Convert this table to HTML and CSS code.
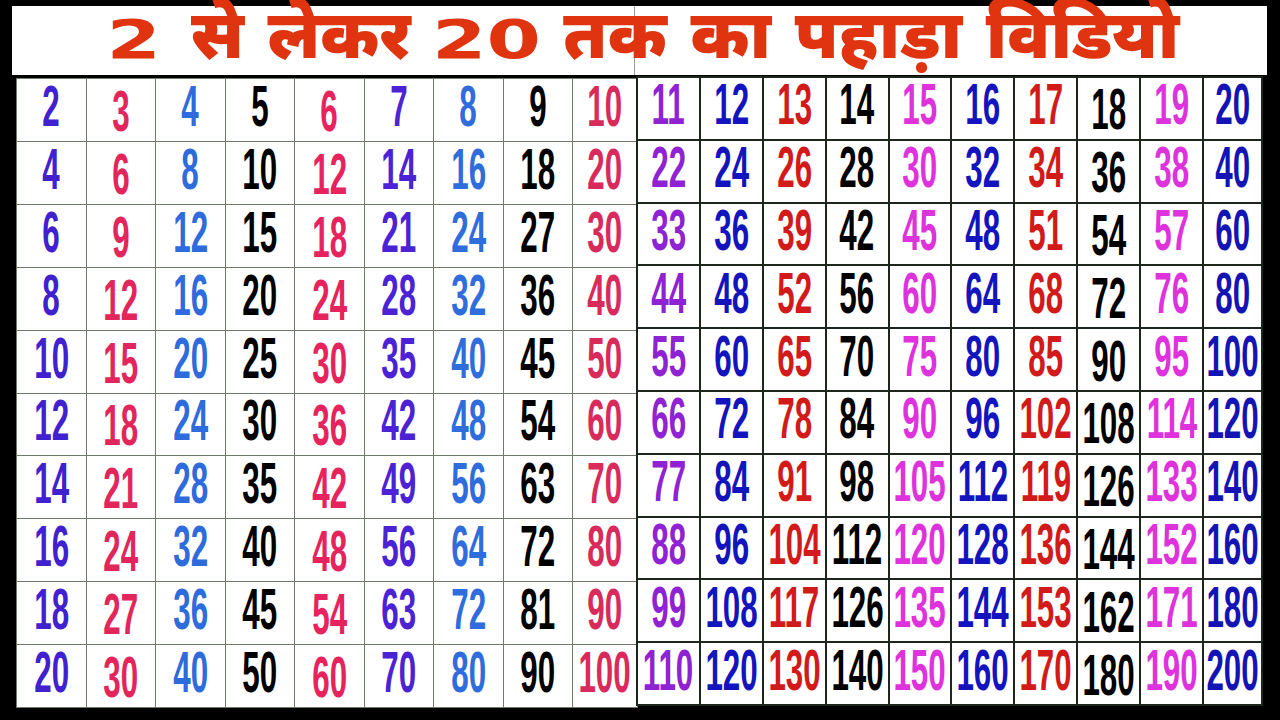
FILE: index.html
```html
<!DOCTYPE html>
<html lang="hi">
<head>
<meta charset="utf-8">
<title>2 से लेकर 20 तक का पहाड़ा</title>
<link rel="stylesheet" href="styles.css">
</head>
<body>
<div class="page">
  <header class="title">
    <h1 class="title-text"><span class="num">2</span> से लेकर <span class="num">20</span> तक का पहाड़ा विडियो</h1>
    <div class="seam"></div>
  </header>
  <div class="tables">
    <div class="table left" id="left"></div>
    <div class="table right" id="right"></div>
  </div>
</div>
<script src="script.js"></script>
</body>
</html>
```
FILE: styles.css
```css
html, body {
  margin: 0;
  padding: 0;
  background: #000;
}
.page {
  width: 1280px;
  height: 720px;
  padding: 6px 13px 0 12px;
  box-sizing: border-box;
  overflow: hidden;
}
.title {
  position: relative;
  height: 69px;
  background: #fff;
  display: flex;
  align-items: center;
  justify-content: center;
}
.title-text {
  margin: 0;
  padding: 0;
  font-family: "Noto Sans Devanagari", "Lohit Devanagari", "Noto Sans", sans-serif;
  font-weight: 900;
  font-size: 68px;
  line-height: 69px;
  color: #e0330f;
  word-spacing: 6px;
  position: relative;
  z-index: 1;
  white-space: nowrap;
}
.num {
  font-family: "DejaVu Sans", sans-serif;
  font-weight: 700;
  font-size: 54px;
  display: inline-block;
  transform: scaleX(1.45);
  margin: 0 15px;
}
.seam {
  position: absolute;
  left: 622px;
  top: 0;
  bottom: 0;
  width: 1px;
  background: #9a9a9a;
}
.tables {
  display: flex;
  align-items: flex-start;
}
.table {
  display: grid;
  grid-template-rows: repeat(10, 1fr);
  box-sizing: border-box;
}
.left {
  margin-top: 3px;
  margin-left: 4px;
  width: 622px;
  height: 630px;
  grid-template-columns: repeat(8, 1fr) 64px;
  gap: 1px;
  background: #6f7a6a;
  border: 1px solid #6f7a6a;
}
.right {
  margin-top: 1px;
  margin-left: -2px;
  width: 627px;
  height: 630px;
  grid-template-columns: repeat(9, 1fr) 57px;
  gap: 2px;
  background: #1c261c;
  border: 2px solid #1c261c;
  position: relative;
  z-index: 2;
}
.cell {
  background: #fff;
  display: flex;
  align-items: center;
  justify-content: center;
  overflow: visible;
  min-width: 0;
}
.cell span {
  display: inline-block;
  position: relative;
  top: -4px;
  font-family: "Liberation Sans", Arial, sans-serif;
  font-weight: 700;
  font-size: 57px;
  line-height: 46px;
  height: 46px;
  transform: scaleX(0.55);
  white-space: nowrap;
}
.c2 { color: #4121cf; }
.c3 { color: #e2265c; }
.c4 { color: #2e6bdc; }
.c5 { color: #000; }
.c6 { color: #e6235c; }
.c7 { color: #4b23d4; }
.c8 { color: #2f6ddc; }
.c9 { color: #000; }
.c10 { color: #d92a5c; }
.c11 { color: #8f22d2; }
.c12 { color: #1414bf; }
.c13 { color: #d21a1a; }
.c14 { color: #000; }
.c15 { color: #de32dc; }
.c16 { color: #1414bf; }
.c17 { color: #d21a1a; }
.c18 { color: #000; }
.c19 { color: #de32dc; }
.c20 { color: #1414b5; }
.low span { top: 1px; }
```
FILE: script.js
```js
function build(id, from, to) {
  var el = document.getElementById(id);
  var html = '';
  for (var r = 1; r <= 10; r++) {
    for (var n = from; n <= to; n++) {
      var low = (n === 6 || n === 3 || n === 18) ? ' low' : '';
      html += '<div class="cell c' + n + low + '"><span>' + (n * r) + '</span></div>';
    }
  }
  el.innerHTML = html;
}
build('left', 2, 10);
build('right', 11, 20);
```
